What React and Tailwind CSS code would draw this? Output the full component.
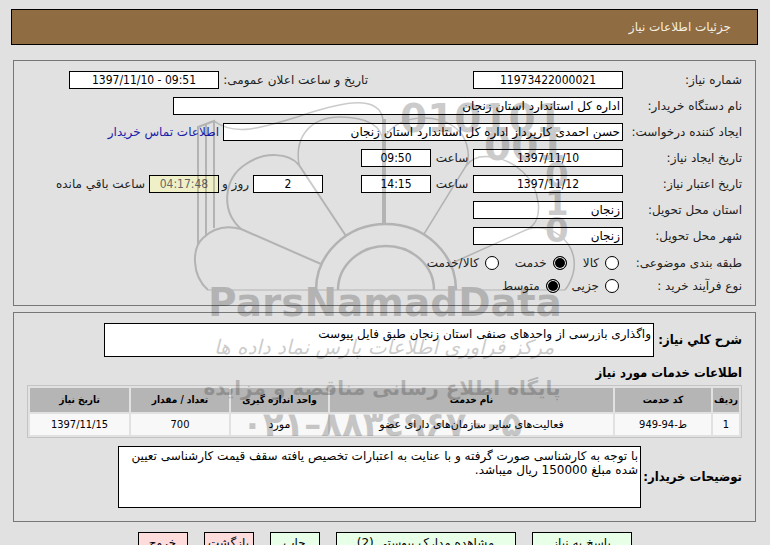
import React from "react";

const inputBase =
  "h-[18px] border border-black bg-white px-0.5 text-[12px] leading-4 text-black outline-none";

const Num = ({ label, value, className = "w-[150px] bg-white text-black" }) => (
  <input
    aria-label={label}
    defaultValue={value}
    dir="ltr"
    className={`h-[18px] border border-black text-center font-['DejaVu_Sans_Condensed','DejaVu_Sans',sans-serif] text-[12px] leading-4 outline-none ${className}`}
  />
);

const Row = ({ label, id, children }) => (
  <div className="flex h-[18px] items-center whitespace-nowrap">
    <label htmlFor={id} className="w-[119px] shrink-0">
      {label}
    </label>
    {children}
  </div>
);

const Radio = ({ name, label, checked }) => (
  <label className="flex items-center gap-1.5">
    <input
      type="radio"
      name={name}
      defaultChecked={checked}
      className="size-[14px] appearance-none rounded-full border border-black bg-white checked:bg-black checked:shadow-[inset_0_0_0_1px_white]"
    />
    {label}
  </label>
);

const condensed = "font-['DejaVu_Sans_Condensed','DejaVu_Sans',sans-serif]";
const boldLabel = `${condensed} text-[13px] font-bold whitespace-nowrap text-black`;

const columns = [
  { title: "ردیف", width: "w-[26px]", value: "1", font: condensed },
  { title: "کد خدمت", width: "w-[96px]", value: "ط-94-949", font: condensed },
  { title: "نام خدمت", width: "", value: "فعالیت‌های سایر سازمان‌های دارای عضو", font: "" },
  { title: "واحد اندازه گیری", width: "w-[97px]", value: "مورد", font: "" },
  { title: "تعداد / مقدار", width: "w-[98px]", value: "700", font: condensed },
  { title: "تاریخ نیاز", width: "w-[99px]", value: "1397/11/15", font: condensed },
];

const buttons = [
  { text: "پاسخ به نیاز", style: "w-[100px] bg-[#e8ffe8]" },
  { text: "مشاهده مدارک پیوستی (2)", style: "w-[180px] bg-[#e8ffe8]" },
  { text: "چاپ", style: "w-[50px] bg-[#e8ffe8]" },
  { text: "بازگشت", style: "w-[50px] bg-[#ffdcdc]" },
  { text: "خروج", style: "w-[50px] bg-[#ffdcdc]" },
];

const Watermark = () => (
  <svg
    viewBox="0 0 400 370"
    className="pointer-events-none absolute top-[90px] left-1/2 -ml-[195px] w-[400px] overflow-visible opacity-20"
    fill="none"
    stroke="black"
    strokeWidth="2"
    direction="ltr"
  >
    <path d="M8 155V37L24 31V138M16 146V34" />
    <path d="M24 31C45 47 75 37 107 27C145 14 188 2 193 29" strokeWidth="1.5" />
    <path d="M194 29V135" strokeWidth="4" />
    <path d="M126 200a70 66 0 0 1 140 0M148 200a48 44 0 0 1 96 0" strokeWidth="2.5" />
    <path d="M18 200C1 185 2 158 13 148C25 136 40 136 51 139L131 174" />
    <path d="M51 139C30 120 34 88 56 74C75 61 99 63 109 75L156 146" />
    <path d="M109 75C104 44 123 27 150 27C177 27 193 36 193 53" strokeWidth="1.5" />
    <path d="M193 53C200 24 250 20 270 42C279 53 280 68 276 76L234 144" strokeWidth="1.5" />
    <path d="M276 76C287 60 316 66 333 82C350 98 355 130 338 139L262 173" strokeWidth="1.5" />
    <path d="M338 139C362 133 382 151 384 170C386 187 375 200 375 200" strokeWidth="1.5" />
    <path d="M18 200H375" strokeWidth="1" />
    <g
      fill="black"
      stroke="none"
      fontFamily="'DejaVu Sans', sans-serif"
      fontWeight="bold"
    >
      <text x="210" y="42" fontSize="39">010101</text>
      <text x="294" y="70" fontSize="39">001</text>
      <text x="355" y="97" fontSize="34">0</text>
      <text x="355" y="125" fontSize="34">1</text>
      <text x="355" y="152" fontSize="34">0</text>
      <text x="195" y="226" fontSize="39" textAnchor="middle">ParsNamadData</text>
      <text x="192" y="305" fontSize="20" textAnchor="middle" direction="rtl">
        پایگاه اطلاع رسانی مناقصه و مزایده
      </text>
      <text x="192" y="346" fontSize="34" textAnchor="middle">۰۲۱–۸۸۳٤۹۶۷۰-۵</text>
    </g>
    <text
      x="194"
      y="264"
      fill="black"
      stroke="none"
      fontSize="20"
      fontStyle="italic"
      textAnchor="middle"
      direction="rtl"
      fontFamily="'DejaVu Sans', sans-serif"
    >
      مرکز فرآوری اطلاعات پارس نماد داده ها
    </text>
  </svg>
);

const App = () => {
  return (
    <div
      dir="rtl"
      className="relative min-h-screen bg-[#e1e1e1] pt-[9px] pr-3 pb-3 pl-[11px] font-['DejaVu_Sans',sans-serif] text-[12px] leading-4 text-[#222]"
    >
      <header className="flex h-9 items-center border border-black bg-[#8f6c41] px-[26px] text-[#f6efe0]">
        <h1>جزئیات اطلاعات نیاز</h1>
      </header>

      <section className="mx-[2px] mt-[15px] border border-[#777] px-[13px] py-[10px]">
        <div className="flex flex-col gap-2">
          <Row label="شماره نیاز:">
            <Num label="شماره نیاز" value="11973422000021" />
            <span className="mr-[105px] w-[149px]">تاریخ و ساعت اعلان عمومی:</span>
            <Num label="تاریخ و ساعت اعلان عمومی" value="1397/11/10 - 09:51" />
          </Row>
          <Row label="نام دستگاه خریدار:" id="buyer">
            <input id="buyer" className={`${inputBase} w-[450px]`} defaultValue="اداره کل استاندارد استان زنجان" />
          </Row>
          <Row label="ایجاد کننده درخواست:" id="creator">
            <input
              id="creator"
              className={`${inputBase} w-[400px]`}
              defaultValue="حسن احمدی کارپرداز اداره کل استاندارد استان زنجان"
            />
            <a href="#contact" className="mr-1 text-[#1a1aaa]">
              اطلاعات تماس خریدار
            </a>
          </Row>
          <Row label="تاریخ ایجاد نیاز:">
            <Num label="تاریخ ایجاد نیاز" value="1397/11/10" />
            <span className="w-[42px] text-center">ساعت</span>
            <Num label="ساعت ایجاد" value="09:50" className="w-[70px] bg-white text-black" />
          </Row>
          <Row label="تاریخ اعتبار نیاز:">
            <Num label="تاریخ اعتبار نیاز" value="1397/11/12" />
            <span className="w-[42px] text-center">ساعت</span>
            <Num label="ساعت اعتبار" value="14:15" className="w-[70px] bg-white text-black" />
            <Num label="روز" value="2" className="mr-[38px] w-[70px] bg-white text-black" />
            <span className="w-[34px] pr-1">روز و</span>
            <Num label="زمان باقی مانده" value="04:17:48" className="w-[70px] bg-[#f0f0c8] text-[#666]" />
            <span className="mr-1">ساعت باقي مانده</span>
          </Row>
          <Row label="استان محل تحویل:" id="province">
            <input id="province" className={`${inputBase} w-[150px]`} defaultValue="زنجان" />
          </Row>
          <Row label="شهر محل تحویل:" id="city">
            <input id="city" className={`${inputBase} w-[150px]`} defaultValue="زنجان" />
          </Row>
        </div>
        <div className="mt-[9px] flex flex-col gap-[5px]">
          <Row label="طبقه بندی موضوعی:">
            <div className="flex gap-4 pr-1">
              <Radio name="category" label="کالا" />
              <Radio name="category" label="خدمت" checked />
              <Radio name="category" label="کالا/خدمت" />
            </div>
          </Row>
          <Row label="نوع فرآیند خرید :">
            <div className="flex gap-3 pr-1">
              <Radio name="process" label="جزیی" />
              <Radio name="process" label="متوسط" checked />
            </div>
          </Row>
        </div>
      </section>

      <section className="mx-[2px] mt-[6px] border border-[#777] px-[13px] pt-[10px] pb-[13px]">
        <div className="flex items-center">
          <label htmlFor="summary" className={`w-[88px] shrink-0 ${boldLabel}`}>
            شرح کلي نیاز:
          </label>
          <textarea
            id="summary"
            className="ml-[77px] h-[34px] flex-1 resize-none border border-black bg-white px-[2px] py-0.5 text-black outline-none"
            defaultValue="واگذاری بازرسی از واحدهای صنفی استان زنجان طبق فایل پیوست"
          />
        </div>
        <h2 className={`mt-2 ${boldLabel}`}>اطلاعات خدمات مورد نیاز</h2>
        <table className="mt-1 w-full table-fixed border-separate border-spacing-[2px] border border-[#c4c4c4] text-center text-[11px] text-black">
          <thead>
            <tr>
              {columns.map((c) => (
                <th
                  key={c.title}
                  className={`h-6 bg-[#b5b5b5] p-0 text-[10px] whitespace-nowrap ${condensed} ${c.width}`}
                >
                  {c.title}
                </th>
              ))}
            </tr>
          </thead>
          <tbody>
            <tr>
              {columns.map((c) => (
                <td key={c.title} className={`h-[21px] bg-[#f8f8f8] p-0 ${c.font}`}>
                  {c.value}
                </td>
              ))}
            </tr>
          </tbody>
        </table>
        <div className="mt-2 flex items-center">
          <label htmlFor="notes" className={`w-[101px] shrink-0 ${boldLabel}`}>
            توضیحات خریدار:
          </label>
          <textarea
            id="notes"
            className="ml-[91px] h-[62px] flex-1 resize-none border border-black bg-white px-[2px] py-0.5 leading-[14px] text-black outline-none"
            defaultValue="با توجه به کارشناسی صورت گرفته و با عنایت به اعتبارات تخصیص یافته سقف قیمت کارشناسی تعیین شده مبلغ 150000 ریال میباشد."
          />
        </div>
      </section>

      <div className="mt-[10px] flex justify-center gap-4">
        {buttons.map((b) => (
          <button key={b.text} className={`h-[22px] border border-black whitespace-nowrap text-black ${b.style}`}>
            {b.text}
          </button>
        ))}
      </div>

      <Watermark />
    </div>
  );
};

export default App;
